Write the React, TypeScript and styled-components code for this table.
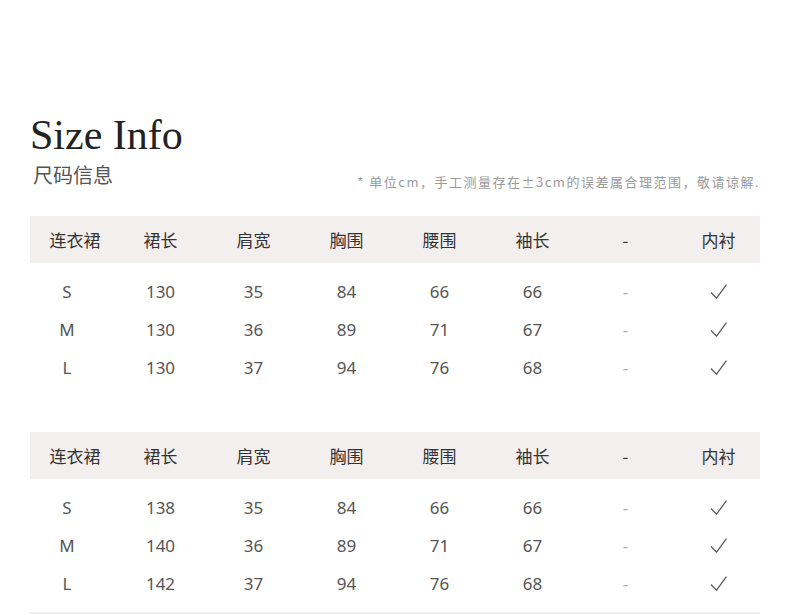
import styled, { createGlobalStyle } from 'styled-components';

const GlobalStyle = createGlobalStyle`
  html, body {
    margin: 0;
    padding: 0;
    background: #ffffff;
  }
  body {
    font-family: 'Noto Sans', 'Noto Sans CJK SC', sans-serif;
  }
`;

const Page = styled.div`
  width: 790px;
  height: 615px;
  overflow: hidden;
  box-sizing: border-box;
  padding: 112px 30px 0;
`;

const Title = styled.h1`
  margin: 0;
  font-family: 'Liberation Serif', serif;
  font-weight: 400;
  font-size: 42px;
  line-height: 46px;
  color: #222;
`;

const SubRow = styled.div`
  display: flex;
  justify-content: space-between;
  align-items: flex-end;
  margin: 3px 0 27px;
`;

const SubTitle = styled.h2`
  margin: 0;
  padding-left: 3px;
  font-family: 'Noto Sans CJK SC', sans-serif;
  font-weight: 400;
  font-size: 20px;
  line-height: 28px;
  color: #555;
`;

const Note = styled.p`
  margin: 0 0 -2px;
  font-family: 'Noto Sans CJK SC', sans-serif;
  font-size: 13px;
  line-height: 18px;
  letter-spacing: 1.5px;
  color: #9a9a9a;
`;

const Table = styled.section<{ $ruled?: boolean }>`
  margin-bottom: 36px;
  border-bottom: ${(p) => (p.$ruled ? '2px solid #f1f0f0' : 'none')};
`;

const Grid = styled.div`
  display: grid;
  grid-template-columns: 84px repeat(7, 93px);
  align-items: center;
`;

const HeadRow = styled(Grid)`
  height: 47px;
  background-color: #f3efee;
`;

const Body = styled.div`
  padding: 9px 0 10px;
`;

const Row = styled(Grid)`
  height: 38px;
`;

const HeadCell = styled.div<{ $first?: boolean }>`
  text-align: center;
  padding-left: ${(p) => (p.$first ? '6px' : '0')};
  font-family: 'Noto Sans CJK SC', sans-serif;
  font-size: 17px;
  color: #333;
`;

const Cell = styled.div<{ $first?: boolean; $muted?: boolean }>`
  display: flex;
  justify-content: center;
  padding-right: ${(p) => (p.$first ? '10px' : '0')};
  font-family: 'Noto Sans', 'Noto Sans CJK SC', sans-serif;
  font-size: 17px;
  color: ${(p) => (p.$muted ? '#aaa' : '#555')};
`;

const CheckIcon = () => (
  <svg width="17" height="15" viewBox="0 0 17 15" fill="none">
    <polyline
      points="1,8.5 6.5,14.2 16.5,0.6"
      stroke="#555"
      strokeWidth="1.2"
      strokeLinejoin="miter"
    />
  </svg>
);

const headers = ['连衣裙', '裙长', '肩宽', '胸围', '腰围', '袖长', '-', '内衬'];

type SizeRow = { size: string; values: number[] };

const tableA: SizeRow[] = [
  { size: 'S', values: [130, 35, 84, 66, 66] },
  { size: 'M', values: [130, 36, 89, 71, 67] },
  { size: 'L', values: [130, 37, 94, 76, 68] },
];

const tableB: SizeRow[] = [
  { size: 'S', values: [138, 35, 84, 66, 66] },
  { size: 'M', values: [140, 36, 89, 71, 67] },
  { size: 'L', values: [142, 37, 94, 76, 68] },
];

const SizeTable = ({ rows, ruled }: { rows: SizeRow[]; ruled?: boolean }) => {
  return (
    <Table $ruled={ruled}>
      <HeadRow>
        {headers.map((h, i) => (
          <HeadCell key={h + i} $first={i === 0}>
            {h}
          </HeadCell>
        ))}
      </HeadRow>
      <Body>
        {rows.map((r) => (
          <Row key={r.size}>
            <Cell $first>{r.size}</Cell>
            {r.values.map((v, i) => (
              <Cell key={i}>{v}</Cell>
            ))}
            <Cell $muted>-</Cell>
            <Cell>
              <CheckIcon />
            </Cell>
          </Row>
        ))}
      </Body>
    </Table>
  );
};

const App = () => {
  return (
    <Page>
      <GlobalStyle />
      <Title>Size Info</Title>
      <SubRow>
        <SubTitle>尺码信息</SubTitle>
        <Note>* 单位cm，手工测量存在±3cm的误差属合理范围，敬请谅解.</Note>
      </SubRow>
      <SizeTable rows={tableA} />
      <SizeTable rows={tableB} ruled />
    </Page>
  );
};

export default App;
